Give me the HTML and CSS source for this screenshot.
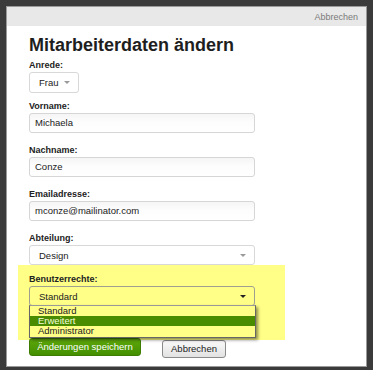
FILE: index.html
```html
<!DOCTYPE html>
<html lang="de">
<head>
<meta charset="utf-8">
<title>Mitarbeiterdaten ändern</title>
<link rel="stylesheet" href="styles.css">
</head>
<body>
<div class="modal">
  <div class="modal-head"><a class="head-cancel">Abbrechen</a></div>
  <div class="modal-body">
    <h1 class="title">Mitarbeiterdaten ändern</h1>
    <div class="group group-first">
      <div class="label">Anrede:</div>
      <div class="select select-small"><span>Frau</span><span class="caret"></span></div>
    </div>
    <div class="group group-second">
      <div class="label">Vorname:</div>
      <div class="input">Michaela</div>
    </div>
    <div class="group">
      <div class="label">Nachname:</div>
      <div class="input">Conze</div>
    </div>
    <div class="group">
      <div class="label">Emailadresse:</div>
      <div class="input">mconze@mailinator.com</div>
    </div>
    <div class="group group-last">
      <div class="label">Abteilung:</div>
      <div class="select select-wide"><span>Design</span><span class="caret"></span></div>
    </div>
    <div class="highlight">
      <div class="label">Benutzerrechte:</div>
      <div class="dd-wrap">
        <div class="select select-wide select-open"><span>Standard</span><span class="caret caret-dark"></span></div>
        <ul class="dd-list">
          <li>Standard</li>
          <li class="active">Erweitert</li>
          <li>Administrator</li>
        </ul>
      </div>
    </div>
    <div class="actions">
      <button class="btn btn-primary">Änderungen speichern</button>
      <button class="btn btn-default">Abbrechen</button>
    </div>
  </div>
</div>
</body>
</html>
```
FILE: styles.css
```css
* { box-sizing: border-box; }
html, body { margin: 0; padding: 0; }
body {
  width: 373px;
  height: 370px;
  background: #3b3b3b;
  padding: 6px 7px 3px 6px;
  font-family: "Liberation Sans", Arial, sans-serif;
  overflow: hidden;
}
.modal {
  width: 361px;
  height: 361px;
  background: #fff;
  border: 1px solid #9a9a9a;
  display: flex;
  flex-direction: column;
  overflow: hidden;
}
.modal-head {
  flex: 0 0 19px;
  height: 19px;
  background: #e8e8e8;
  display: flex;
  justify-content: flex-end;
  align-items: center;
  padding-right: 8px;
}
.head-cancel {
  font-size: 9px;
  color: #7a7a7a;
}
.modal-body {
  flex: 0 0 auto;
  padding: 0 0 0 22px;
  display: flex;
  flex-direction: column;
}
.title {
  margin: 7px 0 0;
  font-size: 18px;
  line-height: 24px;
  font-weight: bold;
  color: #1e1e1e;
}
.group { margin-top: 11px; display: flex; flex-direction: column; align-items: flex-start; }
.group-first { margin-top: 2px; }
.group-second { margin-top: 7px; }
.label {
  font-size: 9px;
  font-weight: bold;
  line-height: 13px;
  color: #222;
}
.input {
  width: 226px;
  height: 20px;
  border: 1px solid #d6d6d6;
  border-radius: 3px;
  background: linear-gradient(#f5f5f5, #fcfcfc 40%, #fff);
  font-size: 9.5px;
  line-height: 18px;
  padding-left: 5px;
  color: #222;
}
.select {
  height: 21px;
  border: 1px solid #d8d8d8;
  border-radius: 3px;
  background: #fff;
  font-size: 9.5px;
  color: #222;
  display: flex;
  align-items: center;
  justify-content: space-between;
  padding: 0 8px 0 9px;
}
.select-small { width: 50px; }
.select-wide { width: 226px; height: 20px; }
.caret {
  width: 0; height: 0;
  border-left: 3px solid transparent;
  border-right: 3px solid transparent;
  border-top: 3px solid #9a9a9a;
}
.caret-dark { border-top-color: #222; }
.highlight {
  margin: 0 0 0 -11px;
  width: 267px;
  height: 75px;
  background: #ffff88;
  padding: 8px 0 0 11px;
  display: flex;
  flex-direction: column;
}
.dd-wrap { position: relative; }
.select-open {
  background: #ffff88;
  border-color: #a0a090;
}
.dd-list {
  position: absolute;
  left: 0;
  top: 19px;
  width: 227px;
  margin: 0;
  padding: 0 0 1px;
  list-style: none;
  background: #ffff88;
  border: 1px solid #666;
  border-top-color: #999;
  box-shadow: 2px 2px 3px rgba(0,0,0,0.45);
  z-index: 2;
}
.dd-list li {
  font-size: 9.5px;
  line-height: 10px;
  height: 10px;
  padding-left: 8px;
  color: #222;
  white-space: nowrap;
}
.dd-list li.active {
  background: #4a8c00;
  color: #f4ffd8;
}
.actions {
  margin-top: -2px;
  display: flex;
  gap: 21px;
  align-items: flex-start;
}
.btn {
  font-family: "Liberation Sans", Arial, sans-serif;
  font-size: 9.5px;
  border-radius: 3px;
  padding: 0;
  height: 18px;
  line-height: 16px;
  white-space: nowrap;
}
.btn-primary {
  width: 112px;
  background: linear-gradient(#5ea80c, #438f00);
  border: 1px solid #3d7d00;
  color: #fff;
}
.btn-default {
  width: 64px;
  margin-top: 2px;
  background: linear-gradient(#fafafa, #e2e2e2);
  border: 1px solid #8a8a8a;
  color: #222;
}
```
